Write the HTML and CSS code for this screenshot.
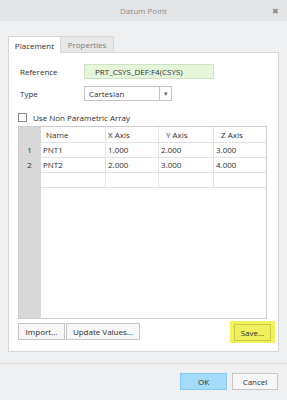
FILE: index.html
```html
<!DOCTYPE html>
<html lang="en">
<head>
    <meta charset="UTF-8">
    <title>Datum Point</title>
    <link rel="stylesheet" href="styles.css">
</head>
<body>
<div class="dialog">
    <div class="titlebar">
        <span class="title">Datum Point</span>
        <span class="close">&#x2716;</span>
    </div>

    <div class="content">
        <div class="tabs">
            <div class="tab active">Placement</div>
            <div class="tab">Properties</div>
        </div>

        <div class="panel">
            <div class="field">
                <label>Reference</label>
                <div class="ref-box">PRT_CSYS_DEF:F4(CSYS)</div>
            </div>
            <div class="field">
                <label>Type</label>
                <div class="select">
                    <span class="select-text">Cartesian</span>
                    <span class="select-arrow">&#x25BE;</span>
                </div>
            </div>
            <div class="check-row">
                <span class="checkbox"></span>
                <span>Use Non Parametric Array</span>
            </div>

            <div class="grid">
                <div class="cell rownum"></div>
                <div class="cell head name">Name</div>
                <div class="cell head x">X Axis</div>
                <div class="cell head y">Y Axis</div>
                <div class="cell head z last">Z Axis</div>

                <div class="cell rownum">1</div>
                <div class="cell">PNT1</div>
                <div class="cell">1.000</div>
                <div class="cell">2.000</div>
                <div class="cell last">3.000</div>

                <div class="cell rownum">2</div>
                <div class="cell">PNT2</div>
                <div class="cell">2.000</div>
                <div class="cell">3.000</div>
                <div class="cell last">4.000</div>

                <div class="cell rownum"></div>
                <div class="cell"></div>
                <div class="cell"></div>
                <div class="cell"></div>
                <div class="cell last"></div>

                <div class="cell rownum filler"></div>
                <div class="filler-rest"></div>
            </div>

            <div class="grid-buttons">
                <button class="btn">Import...</button>
                <button class="btn">Update Values...</button>
                <span class="highlight"><button class="btn save">Save...</button></span>
            </div>
        </div>
    </div>

    <div class="footer">
        <button class="btn ok">OK</button>
        <button class="btn cancel">Cancel</button>
    </div>
</div>
</body>
</html>
```

FILE: styles.css
```css
body {
    margin: 0;
    font-family: "Open Sans", sans-serif;
    font-size: 8px;
    color: #2e2e2e;
    background-color: #eff0f1;
}
.dialog {
    width: 287px;
    height: 400px;
    display: flex;
    flex-direction: column;
}
.titlebar {
    height: 21px;
    background-color: #e4e5e6;
    display: flex;
    align-items: center;
    justify-content: center;
    position: relative;
}
.title {
    color: #8c8c8c;
    font-size: 8px;
}
.close {
    position: absolute;
    right: 8px;
    top: 5px;
    font-size: 8px;
    color: #8a8a8a;
}
.content {
    padding: 15px 8px 0;
}
.tabs {
    display: flex;
}
.tab {
    width: 53px;
    height: 16px;
    box-sizing: border-box;
    border: 1px solid #d6d6d6;
    border-bottom: none;
    background-color: #e7e8e9;
    color: #7a7a7a;
    display: flex;
    align-items: center;
    justify-content: center;
}
.tab.active {
    background-color: white;
    color: #2e2e2e;
    margin-bottom: -1px;
    height: 17px;
    position: relative;
    z-index: 1;
}
.tab + .tab {
    border-left: none;
}
.panel {
    height: 300px;
    box-sizing: border-box;
    background: white;
    border: 1px solid #d6d6d6;
    padding: 11px 11px 0 9px;
    display: flex;
    flex-direction: column;
}
.field {
    display: flex;
    align-items: center;
    padding-left: 2px;
    margin-bottom: 7px;
}
.field label {
    width: 64px;
}
.ref-box {
    width: 130px;
    height: 15px;
    box-sizing: border-box;
    background-color: #e6f6da;
    border: 1px solid #cfe3c1;
    padding-left: 10px;
    line-height: 13px;
}
.select {
    width: 88px;
    height: 15px;
    box-sizing: border-box;
    border: 1px solid #c4c4c4;
    display: flex;
}
.select-text {
    flex: 1;
    padding-left: 4px;
    line-height: 13px;
}
.select-arrow {
    width: 11px;
    border-left: 1px solid #c4c4c4;
    text-align: center;
    font-size: 7px;
    line-height: 13px;
    color: #666;
}
.check-row {
    display: flex;
    align-items: center;
    gap: 6px;
    height: 14px;
    margin: 2px 0 0;
}
.checkbox {
    width: 7px;
    height: 7px;
    border: 1px solid #8a8a8a;
    background: white;
}
.grid {
    margin-top: 2px;
    height: 193px;
    box-sizing: border-box;
    border: 1px solid #cccccc;
    display: grid;
    grid-template-columns: 22px 65px 53px 55px 1fr;
    grid-template-rows: 16px 15px 15px 15px 1fr;
}
.cell {
    border-right: 1px solid #e2e2e2;
    border-bottom: 1px solid #e2e2e2;
    padding-left: 2px;
    line-height: 14px;
    white-space: nowrap;
}
.cell.last {
    border-right: none;
}
.cell.head {
    line-height: 15px;
}
.cell.name { padding-left: 5px; }
.cell.x { padding-left: 2px; }
.cell.y { padding-left: 7px; }
.cell.z { padding-left: 7px; }
.cell.rownum {
    background-color: #d8d8d8;
    border-color: #d8d8d8;
    text-align: center;
    padding-left: 0;
}
.cell.filler {
    border-bottom: none;
}
.filler-rest {
    grid-column: 2 / 6;
}
.grid-buttons {
    display: flex;
    align-items: center;
    gap: 1px;
    margin-top: 2px;
    height: 21px;
}
.btn {
    font-family: "Open Sans", sans-serif;
    font-size: 8px;
    color: #2e2e2e;
    height: 17px;
    padding: 0;
    box-sizing: border-box;
    background-color: #f7f7f7;
    border: 1px solid #c6c6c6;
    border-radius: 0;
}
.grid-buttons .btn {
    width: 47px;
}
.grid-buttons .btn + .btn {
    width: 74px;
}
.highlight {
    margin-left: auto;
    margin-right: -8px;
    background-color: #f4f35a;
    padding: 3px 4px 2px;
    display: flex;
}
.grid-buttons .btn.save {
    width: 37px;
    background-color: #f0ef5c;
    border-color: #c9c84a;
}
.footer {
    margin-top: 11px;
    border-top: 1px solid #dcdcdc;
    padding: 9px 9px 0 0;
    display: flex;
    justify-content: flex-end;
    gap: 5px;
}
.ok {
    width: 47px;
    background-color: #a4dbfa;
    border-color: #86c9f0;
}
.cancel {
    width: 46px;
}
```
